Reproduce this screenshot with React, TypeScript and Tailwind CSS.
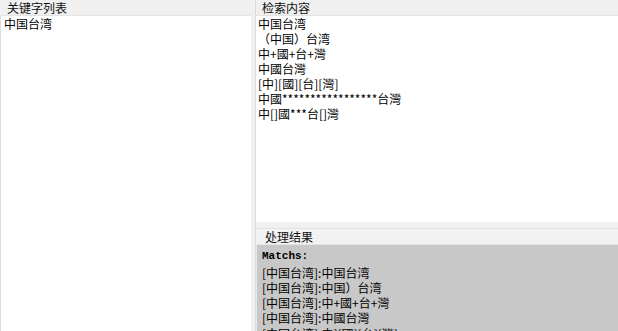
const cjk = { fontFamily: '"Noto Sans CJK SC", "Liberation Sans", sans-serif' };

const searchLines = [
    "中国台湾",
    "（中国）台湾",
    "中+國+台+灣",
    "中國台灣",
    "[中][國][台][灣]",
    "中國*****************台灣",
    "中[]國***台[]灣",
];

const resultLines = [
    "[中国台湾]:中国台湾",
    "[中国台湾]:中国）台湾",
    "[中国台湾]:中+國+台+灣",
    "[中国台湾]:中國台灣",
    "[中国台湾]:中][國][台][灣]",
];

function Header(props: { title: string, className?: string }) {
    return (
        <div className={`h-[16px] shrink-0 bg-[#f0f0f0] border-b border-[#e4e4e4] text-[12px] leading-[15px] text-[#111] ${props.className ?? ""}`}>
            {props.title}
        </div>
    );
}

export default function App() {
    return (
        <div className="flex w-[618px] h-[331px] overflow-hidden bg-[#f0f0f0] text-black" style={cjk}>
            <div className="flex flex-col w-[251px] shrink-0">
                <Header title="关键字列表" className="pl-[7px]" />
                <div className="flex-1 bg-white border-l border-[#dcdcdc] pl-[3px] text-[12px] leading-[15px]">
                    中国台湾
                </div>
            </div>
            <div className="w-[5px] shrink-0 bg-[#f0f0f0] border-r border-[#dadada]" />
            <div className="flex flex-col flex-1">
                <Header title="检索内容" className="pl-[6px]" />
                <div className="h-[206px] shrink-0 bg-white pl-[2px] text-[12px] leading-[15px]">
                    {searchLines.map((line, i) => (
                        <div key={i} className="h-[15px] whitespace-pre">{line}</div>
                    ))}
                </div>
                <div className="h-[7px] shrink-0 bg-[#f0f0f0] border-b border-[#e2e2e2]" />
                <Header title="处理结果" className="pl-[9px] bg-[#f2f2f2]" />
                <div className="flex-1 bg-[#c8c8c8] border-l border-[#e8e8e8] pl-[5px] pt-[4px] text-[12px] leading-[15px]">
                    <div className="h-[15.5px] font-bold text-[11px]" style={{ fontFamily: '"Liberation Mono", monospace' }}>Matchs:</div>
                    {resultLines.map((line, i) => (
                        <div key={i} className="h-[15.3px] whitespace-pre">{line}</div>
                    ))}
                </div>
            </div>
        </div>
    );
}
